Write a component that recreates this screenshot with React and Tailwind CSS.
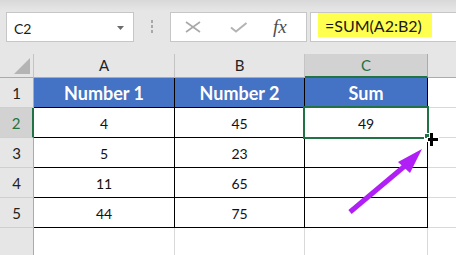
export default function App() {
  const data = [
    ["4", "45", "49"],
    ["5", "23", ""],
    ["11", "65", ""],
    ["44", "75", ""],
  ];
  const font = "font-['Lato',sans-serif]";
  return (
    <div className={`relative w-[456px] h-[255px] overflow-hidden bg-[#e6e6e6] text-black ${font}`}>
      {/* toolbar */}
      <div className="h-[54px] flex items-start pt-[12px] pl-[6px] bg-gradient-to-b from-[#d8d8d8] to-[#e6e6e6] to-[20%]">
        <div className="w-[128px] h-[30px] bg-white border border-[#c6c6c6] flex items-center justify-between pl-[7px] pr-[9px]">
          <span className="text-[14px] leading-none mt-[3px] text-[#1a1a1a]">C2</span>
          <svg width="7" height="4" className="mt-[1px]">
            <polygon points="0,0 7,0 3.5,4" fill="#6b6b6b" />
          </svg>
        </div>
        <div className="w-[36px] pl-[17px] pt-[8px] flex flex-col gap-[2px]">
          <div className="w-[2px] h-[3px] bg-[#a8a8a8]" />
          <div className="w-[2px] h-[3px] bg-[#a8a8a8]" />
          <div className="w-[2px] h-[3px] bg-[#a8a8a8]" />
        </div>
        <div className="w-[137px] h-[30px] bg-white border border-[#c6c6c6] flex items-center pl-[14px]">
          <svg width="16" height="12" className="mt-[-1px]">
            <line x1="1" y1="1" x2="15" y2="11" stroke="#a9a9a9" strokeWidth="1.6" />
            <line x1="15" y1="1" x2="1" y2="11" stroke="#a9a9a9" strokeWidth="1.6" />
          </svg>
          <svg width="18" height="11" className="ml-[29px]">
            <polyline points="1,5.5 6,9.5 16.5,1" fill="none" stroke="#b3b3b3" strokeWidth="2" />
          </svg>
          <span className="ml-[25px] font-['Liberation_Serif',serif] italic text-[19px] leading-none text-[#4d4d4d] mt-[-2px]">fx</span>
        </div>
        <div className="ml-[3px] flex-1 h-[30px] bg-white border border-[#c6c6c6] -mr-[2px] pl-[7px] flex items-start">
          <div className="w-[114px] h-[24px] bg-[#ffff4f] pl-[7px] flex items-center">
            <span className="text-[16px] leading-none mt-[2px] text-[#1a1a1a]">=SUM(A2:B2)</span>
          </div>
        </div>
      </div>

      {/* grid */}
      <div className="relative grid grid-cols-[34px_141px_130px_123px_1fr] grid-rows-[24px_30px_30px_30px_30px_30px_1fr] h-[201px]">
        {/* header row */}
        <div className="border-r border-r-[#c4c4c4] border-b border-b-[#ababab] relative">
          <svg width="34" height="24" className="absolute inset-0">
            <polygon points="30,4 30,20 14,20" fill="#b4b4b4" />
          </svg>
        </div>
        <div className="border-r border-r-[#c4c4c4] border-b border-b-[#ababab] flex items-center justify-center text-[15px] text-[#222]">A</div>
        <div className="border-r border-r-[#c4c4c4] border-b border-b-[#ababab] flex items-center justify-center text-[15px] text-[#222]">B</div>
        <div className="bg-[#d2d2d2] border-r border-r-[#ababab] border-b-2 border-b-[#217346] flex items-center justify-center text-[15px] text-[#217346] pt-[1px]">C</div>
        <div className="border-b border-b-[#ababab]" />

        {/* row 1 */}
        <div className="border-r border-r-[#ababab] border-b border-b-[#cfcfcf] flex items-center justify-center text-[15px] text-[#222] pt-[2px]">1</div>
        {["Number 1", "Number 2", "Sum"].map((h) => (
          <div key={h} className="bg-[#4472c4] border-r border-b border-black flex items-center justify-center text-white font-bold text-[18px] pt-[2px]">
            {h}
          </div>
        ))}
        <div className="bg-white border-b border-b-[#d9d9d9]" />

        {/* data rows */}
        {data.map((r, i) => {
          const sel = i === 0;
          return [
            <div
              key={`h${i}`}
              className={
                sel
                  ? "bg-[#d2d2d2] border-r-2 border-r-[#217346] border-b border-b-[#cfcfcf] flex items-center justify-center text-[15px] text-[#217346] pt-[2px]"
                  : "border-r border-r-[#ababab] border-b border-b-[#cfcfcf] flex items-center justify-center text-[15px] text-[#222] pt-[2px]"
              }
            >
              {i + 2}
            </div>,
            ...r.map((v, j) => (
              <div key={`c${i}-${j}`} className="bg-white border-r border-b border-black flex items-center justify-center text-[14px] text-[#111] pt-[2px]">
                {v}
              </div>
            )),
            <div key={`d${i}`} className="bg-white border-b border-b-[#d9d9d9]" />,
          ];
        })}

        {/* row 6 */}
        <div className="border-r border-r-[#ababab]" />
        <div className="bg-white border-r border-r-[#d9d9d9]" />
        <div className="bg-white border-r border-r-[#d9d9d9]" />
        <div className="bg-white border-r border-r-[#d9d9d9]" />
        <div className="bg-white" />

        {/* selection */}
        <div className="absolute left-[303px] top-[52px] w-[126px] h-[33px] border-2 border-[#217346]" />
        <div className="absolute left-[424px] top-[79px] w-[7px] h-[6px] bg-[#217346] border border-white" />
      </div>

      {/* overlay drawings */}
      <svg className="absolute inset-0 pointer-events-none" width="456" height="255">
        <line x1="350" y1="212" x2="406" y2="165" stroke="#b01ff5" strokeWidth="5" />
        <polygon points="422,149 398,162 410,173" fill="#b01ff5" />
        <rect x="427" y="137" width="12" height="5" fill="white" />
        <rect x="429" y="132" width="5" height="15" fill="white" />
        <rect x="428" y="138" width="10" height="3" fill="black" />
        <rect x="430" y="133" width="3" height="13" fill="black" />
      </svg>
    </div>
  );
}
